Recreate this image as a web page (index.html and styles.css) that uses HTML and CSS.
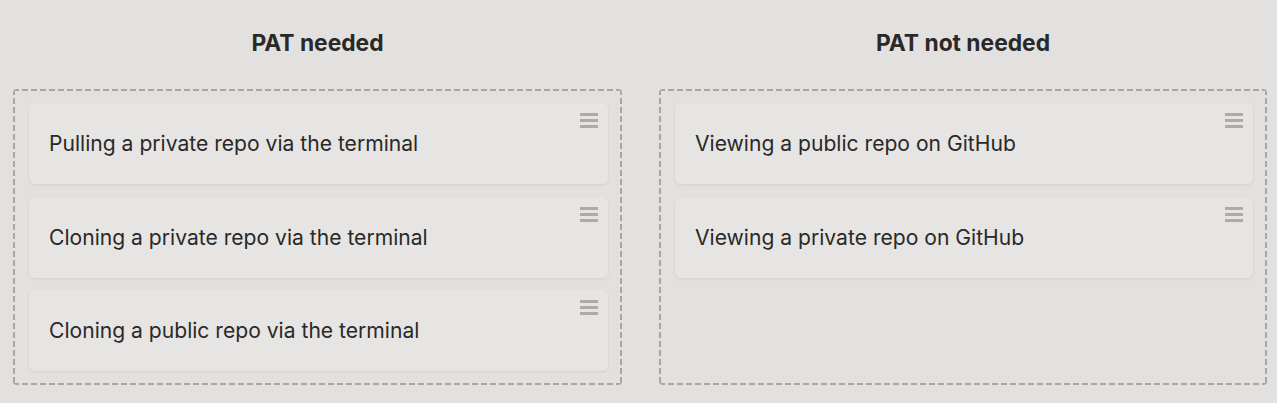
FILE: index.html
```html
<!DOCTYPE html>
<html lang="en">
<head>
<meta charset="utf-8">
<title>PAT sort</title>
<link rel="stylesheet" href="styles.css">
</head>
<body>
<main class="board">
  <section class="column">
    <h2 class="column-title">PAT needed</h2>
    <div class="dropzone">
      <div class="card"><span class="card-text">Pulling a private repo via the terminal</span><span class="handle"><i></i><i></i><i></i></span></div>
      <div class="card"><span class="card-text">Cloning a private repo via the terminal</span><span class="handle"><i></i><i></i><i></i></span></div>
      <div class="card"><span class="card-text">Cloning a public repo via the terminal</span><span class="handle"><i></i><i></i><i></i></span></div>
    </div>
  </section>
  <section class="column">
    <h2 class="column-title">PAT not needed</h2>
    <div class="dropzone">
      <div class="card"><span class="card-text">Viewing a public repo on GitHub</span><span class="handle"><i></i><i></i><i></i></span></div>
      <div class="card"><span class="card-text">Viewing a private repo on GitHub</span><span class="handle"><i></i><i></i><i></i></span></div>
    </div>
  </section>
</main>
</body>
</html>
```
FILE: styles.css
```css
html, body {
  margin: 0;
  padding: 0;
  background: #e2e1df;
}
body {
  font-family: "Inter", "Lato", sans-serif;
  color: #2a2928;
  width: 1277px;
  height: 403px;
  overflow: hidden;
}
.board {
  display: grid;
  grid-template-columns: 609px 608px;
  column-gap: 37px;
  padding: 0 0 0 13px;
}
.column {
  display: flex;
  flex-direction: column;
}
.column-title {
  margin: 0;
  height: 89px;
  box-sizing: border-box;
  padding-top: 28px;
  text-align: center;
  font-size: 22.8px;
  font-weight: 700;
  line-height: 30px;
}
.dropzone {
  box-sizing: border-box;
  height: 296px;
  border: 2px solid transparent;
  border-radius: 4px;
  padding: 12px 12px 12px 14px;
  display: flex;
  flex-direction: column;
  gap: 12.5px;
  background:
    repeating-linear-gradient(90deg, #a8a7a5 0 6px, transparent 6px 9px) left top / 100% 2px no-repeat border-box,
    repeating-linear-gradient(90deg, #a8a7a5 0 6px, transparent 6px 9px) left bottom / 100% 2px no-repeat border-box,
    repeating-linear-gradient(180deg, #a8a7a5 0 6px, transparent 6px 9px) left top / 2px 100% no-repeat border-box,
    repeating-linear-gradient(180deg, #a8a7a5 0 6px, transparent 6px 9px) right top / 2px 100% no-repeat border-box;
}
.card {
  position: relative;
  height: 81px;
  box-sizing: border-box;
  background: #e6e5e3;
  border-radius: 6px;
  box-shadow: 0 1px 3px rgba(0,0,0,0.08);
  display: flex;
  align-items: center;
  padding: 0 20px;
  font-size: 21.1px;
}
.handle {
  position: absolute;
  top: 10px;
  right: 10px;
  width: 18px;
  display: flex;
  flex-direction: column;
  gap: 3px;
}
.handle i {
  display: block;
  height: 3px;
  background: #acaba9;
}
```
